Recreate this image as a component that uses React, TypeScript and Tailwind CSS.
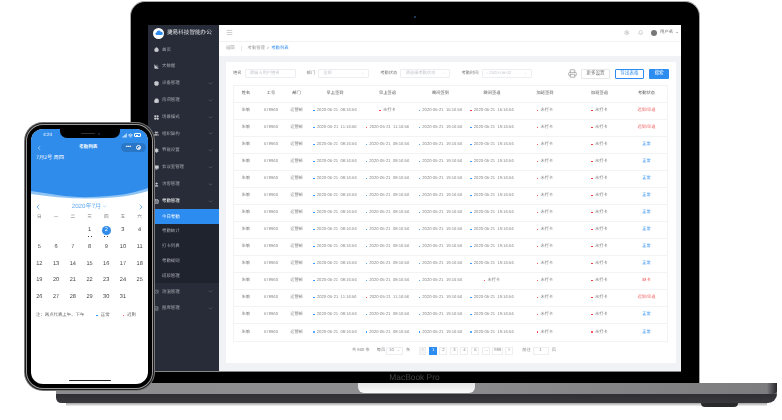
import {
  AlarmClock, BarChart3, Bell, Building2, CalendarDays, ChevronDown, ChevronLeft, ChevronRight,
  Cpu, FileText, Home, LayoutGrid, Menu, Monitor, Printer, Settings, Signal, User, Users, Wifi,
} from 'lucide-react';

const menu = [
  { name: '首页', icon: Home },
  { name: '大数据', icon: BarChart3 },
  { name: '设备管理', icon: Cpu, arrow: true },
  { name: '房间管理', icon: Building2, arrow: true },
  { name: '场景模式', icon: LayoutGrid, arrow: true },
  { name: '组织架构', icon: Users, arrow: true },
  { name: '节能设置', icon: Settings, arrow: true },
  { name: '会议室管理', icon: Monitor, arrow: true },
  { name: '访客管理', icon: User, arrow: true },
];

const subMenu = ['今日考勤', '考勤统计', '打卡列表', '考勤规则', '班段管理'];

const columns = ['姓名', '工号', '部门', '早上签到', '早上签退', '晚间签到', '晚间签退', '加班签到', '加班签退', '考勤状态'];

type Row = { a: string; b: string | null; bLate?: boolean; c: string; d: string | null; dLate?: boolean; status: string };

const normal: Row = { a: '08:16:56', b: '08:16:56', c: '19:16:56', d: '19:16:56', status: '正常' };

const rows: Row[] = [
  { a: '08:16:56', b: null, c: '15:16:56', d: '15:16:56', dLate: true, status: '迟到/早退' },
  { a: '11:16:56', b: '11:16:56', bLate: true, c: '19:16:56', d: '19:16:56', status: '迟到/早退' },
  normal, normal, normal, normal, normal, normal, normal, normal,
  { a: '08:16:56', b: '08:16:56', c: '19:16:56', d: null, status: '缺卡' },
  { a: '11:16:56', b: '11:16:56', bLate: true, c: '19:16:56', d: '19:16:56', status: '迟到/早退' },
  normal, normal,
];

const days = Array.from({ length: 31 }, (_, i) => i + 1);

function Clock({ time, late }: { time: string; late?: boolean }) {
  return (
    <span className="flex items-center justify-center gap-[2px] whitespace-pre">
      <i className={`w-[1.5px] h-[1.5px] rounded-full ${late ? 'bg-[#f5222d]' : 'bg-[#1890ff]'}`} />
      {`2020-05-21  ${time}`}
    </span>
  );
}

function Missing() {
  return (
    <span className="flex items-center justify-center gap-[2px]">
      <i className="w-[1.5px] h-[1.5px] rounded-full bg-[#f5222d]" />
      未打卡
    </span>
  );
}

function Field({ label, text, width, arrow = true }: { label: string; text: string; width: string; arrow?: boolean }) {
  return (
    <div className="flex items-center gap-[3px] text-[4.3px] text-[#777]">
      <span className="whitespace-nowrap">{label}</span>
      <div className={`${width} h-[9px] flex items-center justify-between px-[4px] border border-[#eceef2] rounded-[1px] text-[#c4c6cc]`}>
        <span>{text}</span>
        {arrow && <ChevronDown size={3} />}
      </div>
    </div>
  );
}

function Laptop() {
  return (
    <div className="absolute left-[130px] top-[1px] w-[570px] h-[382px] pl-[17px] pr-[18px] pt-[22.5px] pb-[11px] bg-black rounded-t-[15px] border-t border-x border-[#a8a8a8]">
      <i className="absolute left-[283px] top-[14px] w-[2px] h-[2px] rounded-full bg-[#2b4a78]" />
      <div className="flex h-full blur-[0.4px] border-b border-[#888] bg-[#f0f2f5]">
        <aside className="w-[71px] shrink-0 bg-[#272c38] text-[4.4px] text-[#a6a9b0]">
          <div className="h-[17px] flex items-center gap-[3px] pl-[5px]">
            <span className="w-[11px] h-[11px] rounded-full bg-white flex items-center justify-center">
              <svg viewBox="0 0 12 12" className="w-[8px] h-[8px]">
                <path d="M2 9a2 2 0 0 1 .3-3.9A3.4 3.4 0 0 1 8.7 4 2.6 2.6 0 0 1 10 9z" fill="#2d8cf0" />
              </svg>
            </span>
            <span className="text-[5.6px] text-[#e4e5e8] whitespace-nowrap">捷易科技智能办公</span>
          </div>
          {menu.map((m) => (
            <div key={m.name} className="h-[16.8px] flex items-center pl-[6px] pr-[6px]">
              <m.icon size={5} className="text-[#c9cbd0]" fill="#c9cbd0" />
              <span className="ml-[3px]">{m.name}</span>
              {m.arrow && <ChevronDown size={5} className="ml-auto text-[#8a8e98]" />}
            </div>
          ))}
          <div className="h-[16.8px] flex items-center pl-[6px] pr-[6px] text-white">
            <CalendarDays size={5} />
            <span className="ml-[3px]">考勤管理</span>
            <ChevronDown size={5} className="ml-auto text-[#8a8e98]" />
          </div>
          <div className="bg-[#1f232d]">
            {subMenu.map((s, i) => (
              <div key={s} className={`h-[14.8px] flex items-center pl-[14px] ${i === 0 ? 'bg-[#2d8cf0] text-white' : ''}`}>
                {s}
              </div>
            ))}
          </div>
          <div className="h-[16.8px] flex items-center pl-[6px] pr-[6px]">
            <AlarmClock size={5} />
            <span className="ml-[3px]">测温管理</span>
            <ChevronDown size={5} className="ml-auto text-[#8a8e98]" />
          </div>
          <div className="h-[16.8px] flex items-center pl-[6px] pr-[6px]">
            <FileText size={5} />
            <span className="ml-[3px]">图库管理</span>
            <ChevronDown size={5} className="ml-auto text-[#8a8e98]" />
          </div>
        </aside>

        <main className="flex-1 min-w-0 flex flex-col">
          <header className="h-[17px] shrink-0 bg-white border-b border-[#f2f2f2] flex items-center pl-[7px] pr-[3px] text-[#888]">
            <Menu size={7} strokeWidth={1.4} />
            <Settings size={5.5} className="ml-auto text-[#aaa]" />
            <Bell size={5.5} className="ml-[8px] text-[#aaa]" />
            <span className="ml-[8px] w-[6px] h-[6px] rounded-full bg-[#777]" />
            <span className="ml-[3px] text-[4.3px] text-[#666]">用户名</span>
            <i className="ml-[3px] w-0 h-0 border-x-[1.2px] border-t-[1.6px] border-x-transparent border-t-[#777]" />
          </header>
          <div className="h-[14px] shrink-0 bg-white flex items-center pl-[7px] text-[4.3px] text-[#999]">
            <span>返回</span>
            <i className="mx-[6px] w-px h-[5px] bg-[#e8e8e8]" />
            <span>考勤管理</span>
            <span className="mx-[2px]">&gt;</span>
            <span className="text-[#2d8cf0]">考勤列表</span>
          </div>

          <div className="flex-1 min-h-0 pl-[7px] pr-[5px] pt-[6px] pb-[8px]">
            <section className="h-full bg-white px-[7px] pt-[7px]">
              <div className="h-[10px] flex items-center">
                <Field label="姓名" text="请输入用户姓名" width="w-[51px]" arrow={false} />
                <div className="ml-[11px]"><Field label="部门" text="全部" width="w-[51px]" /></div>
                <div className="ml-[11px]"><Field label="考勤状态" text="请选择考勤状态" width="w-[50px]" /></div>
                <div className="ml-[11px]"><Field label="考勤时间" text="▫ 2020-06-02" width="w-[50px]" /></div>
                <Printer size={9} className="ml-auto mr-[4px] text-[#999]" />
                <button className="w-[29px] h-[10px] border border-[#e6e8ec] text-[4.6px] text-[#777] rounded-[1px]">更多设置</button>
                <button className="ml-[5px] w-[29px] h-[10px] border border-[#2d8cf0] text-[4.6px] text-[#2d8cf0] rounded-[1px]">导出表格</button>
                <button className="ml-[5px] w-[20px] h-[10px] bg-[#2d8cf0] text-[4.6px] text-white rounded-[1px]">搜索</button>
              </div>

              <div className="mt-[6px] w-[435px] border border-[#f2f3f5] text-[4.2px] text-[#888]">
                <div className="grid grid-cols-[24px_26px_25px_52px_53px_53px_50px_56px_53px_1fr] h-[17px] items-center text-center text-[#555] border-b border-[#f2f3f5]">
                  {columns.map((c) => <span key={c}>{c}</span>)}
                </div>
                {rows.map((r, i) => (
                  <div key={i} className="grid grid-cols-[24px_26px_25px_52px_53px_53px_50px_56px_53px_1fr] h-[17px] items-center text-center border-b border-[#f2f3f5] last:border-b-0">
                    <span>朱敏</span>
                    <span>578960</span>
                    <span>运营部</span>
                    <Clock time={r.a} />
                    {r.b ? <Clock time={r.b} late={r.bLate} /> : <Missing />}
                    <Clock time={r.c} />
                    {r.d ? <Clock time={r.d} late={r.dLate} /> : <Missing />}
                    <Missing />
                    <Missing />
                    <span className={r.status === '正常' ? 'text-[#2d8cf0]' : 'text-[#ef5b5b]'}>{r.status}</span>
                  </div>
                ))}
              </div>

              <div className="mt-[5px] h-[8px] flex items-center text-[4.2px] text-[#888]">
                <span className="ml-[119px]">共 800 条</span>
                <span className="ml-[7px]">每页</span>
                <span className="ml-[1px] w-[17px] h-[8px] px-[2px] border border-[#eceef2] flex items-center justify-between">10<ChevronDown size={3} /></span>
                <span className="ml-[3px]">条</span>
                <span className="ml-[9px] w-[7px] h-[8px] bg-[#f5f5f5] border border-[#eee] flex items-center justify-center text-[#bbb]">&lt;</span>
                <span className="ml-[3px] w-[8px] h-[8px] bg-[#2d8cf0] text-white flex items-center justify-center">1</span>
                <span className="ml-[2px] w-[8px] h-[8px] border border-[#eee] flex items-center justify-center">2</span>
                <span className="ml-[3px] w-[8px] h-[8px] border border-[#eee] flex items-center justify-center">3</span>
                <span className="ml-[2px] w-[8px] h-[8px] border border-[#eee] flex items-center justify-center">4</span>
                <span className="ml-[3px] w-[8px] h-[8px] border border-[#eee] flex items-center justify-center">5</span>
                <span className="ml-[3px] w-[8px] h-[8px] border border-[#eee] flex items-center justify-center">...</span>
                <span className="ml-[2px] w-[11px] h-[8px] border border-[#eee] flex items-center justify-center">999</span>
                <span className="ml-[2px] w-[8px] h-[8px] border border-[#eee] flex items-center justify-center">&gt;</span>
                <span className="ml-[9px]">前往</span>
                <span className="ml-[2px] w-[16px] h-[8px] border border-[#eee] flex items-center justify-center">1</span>
                <span className="ml-[3px]">页</span>
              </div>
            </section>
          </div>
        </main>
      </div>
      <div className="h-[11px] flex items-center justify-center blur-[0.3px] text-[8.4px] text-[#454545]">MacBook Pro</div>
    </div>
  );
}

function LaptopBase() {
  return (
    <div className="absolute left-[56px] top-[383px] w-[721px] h-[24px]">
      <div className="h-[11px] rounded-tr-[2px] bg-gradient-to-r from-[#8d8d8f] via-[#8e8e90] to-[#7c7c7f] relative">
        <div className="absolute right-0 top-0 bottom-0 w-[10px] rounded-br-[4px] bg-gradient-to-r from-transparent to-[#26262a]" />
        <div className="absolute left-[302px] top-0 w-[117px] h-[10px] rounded-b-[6px] bg-gradient-to-b from-[#e4e4e4] to-[#fafafa]" />
      </div>
      <div className="h-[9px] rounded-b-[14px] bg-gradient-to-b from-[#2f2f33] to-[#3a3a3e] rounded-bl-[8px]" />
      <div className="absolute left-[645px] top-[20px] w-[37px] h-[3.5px] rounded-b-[8px] bg-[#2a2a2c]" />
      <div className="h-[3px] mx-[10px] bg-gradient-to-b from-[#a5a5a5] to-[#f2f2f2]" />
    </div>
  );
}

function Phone() {
  return (
    <div className="absolute left-[24px] top-[122px] w-[131px] h-[269px] rounded-[19px] bg-[#777] p-px">
      <div className="h-full rounded-[18px] bg-[#1c1c1e] p-px">
        <div className="h-full rounded-[17px] bg-[#9a9a9a] p-px">
          <div className="h-full rounded-[16px] bg-black px-[4px] pt-[4px] pb-[4px]">
            <div className="relative h-full overflow-hidden rounded-[12px] bg-white blur-[0.25px] text-[#444]">
              <div className="relative h-[70px] bg-[#2f8ceb] text-white">
                <div className="h-[12px] flex items-center pl-[12px] pr-[7px] text-[4.6px]">
                  <span>4:24</span>
                  <Signal size={5} className="ml-auto" strokeWidth={3} />
                  <Wifi size={5} className="ml-[1px]" strokeWidth={3} />
                  <span className="ml-[1px] w-[7px] h-[3.5px] rounded-[1px] border-[0.5px] border-white p-[0.5px]"><i className="block h-full w-[60%] bg-white" /></span>
                </div>
                <div className="h-[13px] flex items-center pl-[5px] pr-[2px] relative">
                  <ChevronLeft size={6} />
                  <span className="absolute left-[48px] text-[4.6px] font-bold">考勤列表</span>
                  <div className="ml-auto w-[25px] h-[9px] rounded-full bg-[#2a76c6] flex items-center justify-around px-[2px]">
                    <span className="text-[5px] leading-none font-bold">•••</span>
                    <span className="w-[5px] h-[5px] rounded-full border-[0.7px] border-white flex items-center justify-center"><i className="w-[2px] h-[2px] rounded-full bg-white" /></span>
                  </div>
                </div>
                <p className="pl-[5px] mt-[1px] text-[5.2px]">7月2号 周四</p>
                <svg viewBox="0 0 118 16" preserveAspectRatio="none" className="absolute left-0 bottom-[-4px] w-full h-[16px]">
                  <path d="M0 4C20 7 40 11 62 10 85 9 102 7 118 1V16H0Z" fill="#8fc3f3" />
                  <path d="M0 7C20 10 40 12 62 11.5 85 11 102 9 118 4V16H0Z" fill="#ffffff" />
                </svg>
              </div>
              <div className="absolute left-[29px] top-0 w-[60px] h-[9px] rounded-b-[7px] bg-black flex items-center justify-center gap-[3px]">
                <i className="w-[14px] h-[1px] rounded bg-[#333]" />
                <i className="w-[2px] h-[2px] rounded-full bg-[#1d2c4a]" />
              </div>

              <div className="relative h-[13px] mt-[1px] px-[3px] flex items-center justify-between text-[#2f8ceb]">
                <ChevronLeft size={8} />
                <span className="flex items-center gap-[1px] text-[6.2px] text-[#5fa8ee]">2020年7月<ChevronDown size={5} /></span>
                <ChevronRight size={8} />
              </div>
              <div className="grid grid-cols-7 h-[9px] items-center text-center text-[4.6px] text-[#777]">
                {['日', '一', '二', '三', '四', '五', '六'].map((d) => <span key={d}>{d}</span>)}
              </div>
              <div className="grid grid-cols-7 auto-rows-[16.7px] items-center text-center text-[5.6px]">
                <span /><span /><span />
                {days.map((d) => (
                  <span key={d} className="relative flex justify-center">
                    {d === 2 ? (
                      <b className="w-[9px] h-[9px] rounded-full bg-[#2f8ceb] text-white font-normal flex items-center justify-center">2</b>
                    ) : d}
                    {d < 3 && <i className="absolute top-[10px] left-[6.5px] w-[4px] h-[1px] border-x border-[#444]" />}
                  </span>
                ))}
              </div>
              <div className="mt-[5px] h-[10px] pl-[5px] flex items-center text-[4.4px] text-[#666]">
                <span>注：两点代表上午、下午</span>
                <i className="ml-[12px] w-[1.5px] h-[1.5px] rounded-full bg-[#1890ff]" />
                <span className="ml-[3px]">正常</span>
                <i className="ml-[13px] w-[1.5px] h-[1.5px] rounded-full bg-[#f5222d]" />
                <span className="ml-[3px]">迟到</span>
              </div>
              <i className="absolute left-[38px] bottom-[3px] w-[42px] h-[1.5px] rounded bg-[#222]" />
            </div>
          </div>
        </div>
      </div>
    </div>
  );
}

export default function App() {
  return (
    <div className="relative w-[782px] h-[420px] overflow-hidden bg-white [text-rendering:geometricPrecision] font-['Liberation_Sans','Noto_Sans_CJK_SC',sans-serif]">
      <LaptopBase />
      <Laptop />
      <Phone />
    </div>
  );
}
